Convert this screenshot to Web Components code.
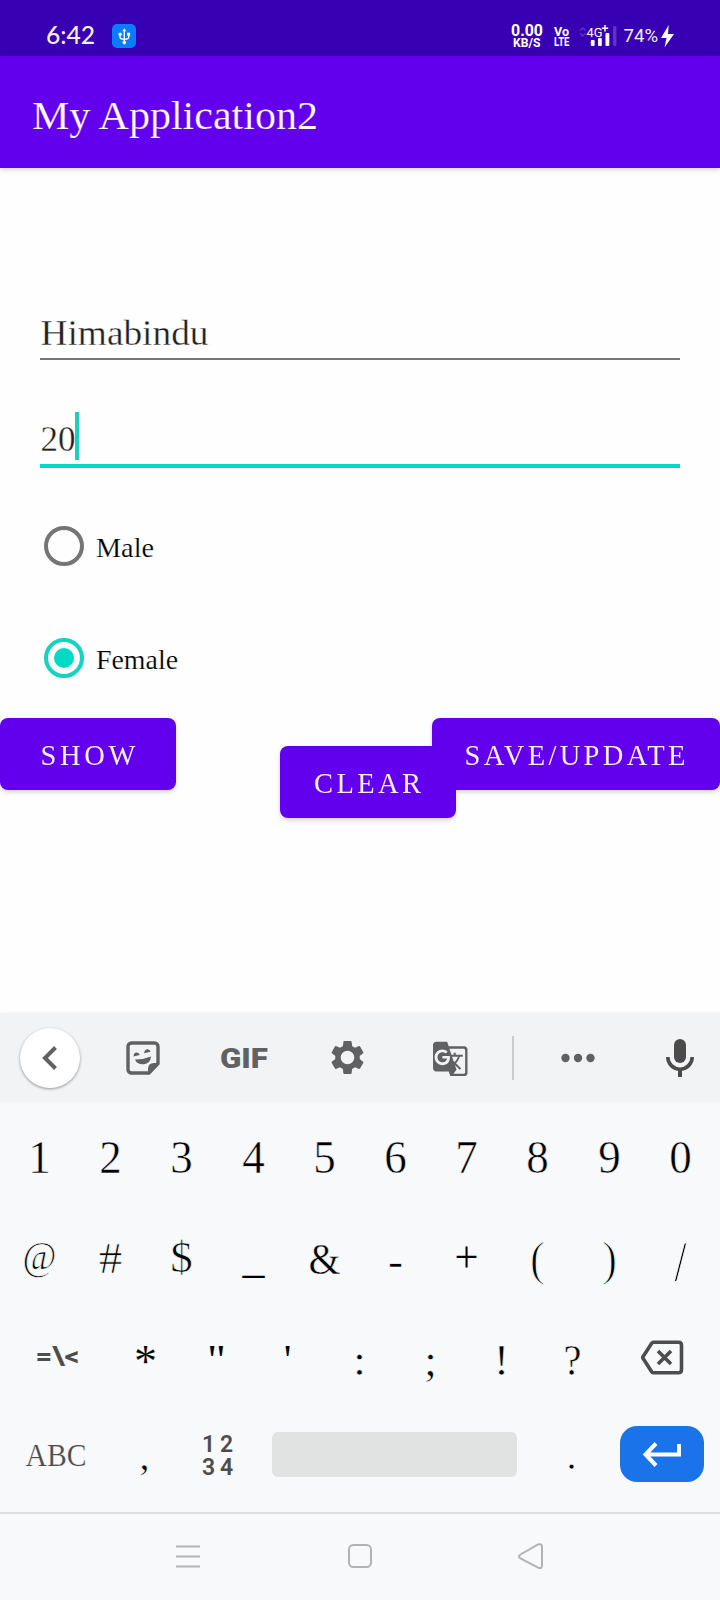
<!DOCTYPE html>
<html lang="en">
<head>
<meta charset="utf-8">
<title>My Application2</title>
<style>
body{margin:0;background:#fefefe;font-family:"Liberation Serif",serif}
</style>
</head>
<body>
<phone-screen>
  <status-bar></status-bar>
  <app-bar heading="My Application2"></app-bar>
  <profile-form></profile-form>
  <soft-keyboard></soft-keyboard>
  <nav-bar></nav-bar>
</phone-screen>
<script>
const define = (name, html) => customElements.define(name, class extends HTMLElement {
  constructor() {
    super();
    this.attachShadow({mode: 'open'});
  }
  connectedCallback() {
    const t = document.createElement('template');
    t.innerHTML = typeof html === 'function' ? html(this) : html;
    this.shadowRoot.replaceChildren(t.content.cloneNode(true));
  }
});
const attr = (el, n, d) => el.getAttribute(n) ?? d;
const esc = s => s.replace(/&/g, '&amp;').replace(/</g, '&lt;');

/* One line of text on an exact baseline: w/h box, x/y origin, optional fitted length.
   "thin" strokes the glyph edges in the surface colour (--surface) to lighten them. */
define('ink-text', el => {
  const len = attr(el, 'len', '');
  const fit = attr(el, 'fit', 'spacingAndGlyphs');
  const thin = attr(el, 'thin', '');
  return `<style>:host{display:block;flex:none}svg{display:block;overflow:visible}text{white-space:pre;${thin ? `stroke:var(--surface,#fefefe);stroke-width:${thin}` : ''}}</style>
  <svg width="${attr(el,'w',71)}" height="${attr(el,'h',40)}"><text x="${attr(el,'x',0)}" y="${attr(el,'y',30)}"
   font-size="${attr(el,'size',30)}" font-family="${attr(el,'font','Liberation Serif')}, serif" font-weight="${attr(el,'weight',400)}"
   text-anchor="${attr(el,'anchor','start')}" fill="currentColor" ${len ? `textLength="${len}" lengthAdjust="${fit}"` : ''}>${esc(attr(el,'value',''))}</text></svg>`;
});

define('phone-screen', `<style>:host{display:flex;flex-direction:column;width:720px;height:1600px;background:#fefefe;overflow:hidden}</style><slot></slot>`);

define('status-bar', `<style>
:host{display:flex;flex:none;height:56px;background:#3700b3;color:#f3effb;box-sizing:border-box;padding-left:46px}
svg{display:block;flex:none;overflow:visible}
.usb{margin:24px 0 0 16px}
.net{margin-left:375px}.gap{margin-left:10px}.sig{margin-left:9px}.bat{margin-left:6px}
</style>
<ink-text w="50" h="56" y="44.300" size="25.500" font="Lato" weight="500" len="49" value="6:42"></ink-text>
<svg class="usb" width="24" height="24"><rect width="24" height="24" rx="5" fill="#0a7cff"/>
 <g stroke="#fff" stroke-width="1.400" fill="none"><path d="M12.300 6v13M8 10v3.200q0 1.800 4.300 2.200M16.700 10v3.200q0 1.800-4.300 2.200"/></g>
 <path d="M12.300 4.200l2 3h-4z" fill="#fff"/><circle cx="12.300" cy="18.600" r="1.800" fill="#fff"/><circle cx="8.100" cy="10.200" r="1.700" fill="#fff"/><rect x="15.100" y="8.700" width="3" height="3" fill="#fff"/></svg>
<svg class="net" width="33" height="56" font-family="Roboto, sans-serif" font-weight="700" fill="#fff">
 <text x="0" y="36.300" font-size="17" textLength="32" lengthAdjust="spacingAndGlyphs">0.00</text>
 <text x="2" y="46.800" font-size="12.500" textLength="27.500" lengthAdjust="spacingAndGlyphs">KB/S</text></svg>
<svg class="gap" width="16" height="56" font-family="Roboto, sans-serif" font-weight="700" fill="#fff">
 <text x="0" y="36" font-size="13.500" textLength="15" lengthAdjust="spacingAndGlyphs">Vo</text>
 <text x="0" y="46.200" font-size="13" textLength="15.500" lengthAdjust="spacingAndGlyphs">LTE</text></svg>
<svg class="sig" width="39" height="56" fill="#fff">
 <path d="M1 30.800l2.800-3 2.800 3M1 33l2.800 3 2.800-3" fill="none" stroke="#5a30c2" stroke-width="1.600"/>
 <text x="7.500" y="37" font-family="Roboto, sans-serif" font-weight="400" font-size="13.500" textLength="16" lengthAdjust="spacingAndGlyphs">4G</text>
 <path d="M26 25v6.500M22.800 28.200h6.400" stroke="#fff" stroke-width="1.500"/>
 <rect x="11.800" y="40" width="3.800" height="6" rx="1"/><rect x="19" y="38" width="3.800" height="8" rx="1"/><rect x="26.500" y="33" width="3.800" height="13" rx="1"/>
 <rect x="34" y="26" width="3.400" height="20" rx="1.200" fill="#5c34c3"/></svg>
<ink-text class="bat" w="34" h="56" x="-.500" y="42.200" size="19" font="Roboto" len="34.500" value="74%"></ink-text>
<svg width="18" height="56" fill="#fff"><path d="M10.700 25L3 38h5.500L6.500 47.500 16 34h-6z"/></svg>`);

define('app-bar', el => `<style>:host{display:block;flex:none;height:112px;background:#6200ee;color:#fcf8ff;padding-left:32px;box-shadow:0 1px 6px rgba(0,0,0,.2);z-index:1;--surface:#6200ee}</style>
<ink-text w="300" h="112" y="73" size="40.500" thin=".200" len="286" value="${el.getAttribute('heading')}"></ink-text>`);

define('text-field', el => `<style>
:host{display:block;border-bottom:2px solid #777;color:#202020;height:60px}
:host([focused]){border-bottom:4px solid #03dac5}
.line{display:flex;height:100%}
.caret{width:4px;height:48px;background:#1cd0be;margin-top:4px}
</style><div class="line"><ink-text w="${attr(el,'w')}" h="60" x=".500" y="${attr(el,'y')}" size="36" thin=".350" len="${attr(el,'len')}" value="${attr(el,'value')}"></ink-text>${el.hasAttribute('focused') ? '<div class="caret"></div>' : ''}</div>`);

define('radio-option', el => `<style>
:host{display:flex;height:40px;color:#000}
svg{display:block;margin-right:12px}
</style><svg width="40" height="40"><circle cx="20" cy="20" r="18" fill="none" stroke-width="4" stroke="${el.hasAttribute('checked') ? '#14d3c0' : '#757575'}"/>${el.hasAttribute('checked') ? '<circle cx="20" cy="20" r="10" fill="#03dac5"/>' : ''}</svg>
<ink-text w="100" h="40" y="31.300" size="28" thin=".200" len="${attr(el,'len')}" value="${attr(el,'label')}"></ink-text>`);

define('action-button', el => `<style>
:host{display:block;height:72px;border-radius:8px;background:#6200ee;color:#f6efff}
</style><ink-text w="${attr(el,'w')}" h="72" x="${attr(el,'x')}" y="47" size="28.500" len="${attr(el,'len')}" fit="spacing" value="${attr(el,'label')}"></ink-text>`);

define('profile-form', `<style>
:host{display:flex;flex:1;flex-direction:column;align-items:stretch;min-height:0}
.fields{display:flex;flex-direction:column;padding:130px 40px 0}
.age{margin-top:48px;height:56px}
.radios{display:flex;flex-direction:column;gap:72px;padding:58px 44px 0}
.buttons{display:flex;align-items:flex-start;margin-top:40px;filter:drop-shadow(0 2px 2px rgba(0,0,0,.18))}
.clear{margin:28px 0 0 104px}
.save{margin-left:-24px}
</style>
<div class="fields">
 <text-field value="Himabindu" w="300" y="47" len="168"></text-field>
 <text-field class="age" focused value="20" w="35" y="43" len="35"></text-field>
</div>
<div class="radios"><radio-option label="Male" len="58"></radio-option><radio-option label="Female" len="82" checked></radio-option></div>
<div class="buttons">
 <action-button label="SHOW" w="176" x="40.500" len="95"></action-button>
 <action-button class="clear" label="CLEAR" w="176" x="34" len="107"></action-button>
 <action-button class="save" label="SAVE/UPDATE" w="288" x="32.500" len="221"></action-button>
</div>`);

define('tool-bar', `<style>
:host{display:grid;grid-template-columns:100px 86px 116px 91px 114px 12px 117px 88px;width:724px;height:89px;background:#f1f3f4;align-items:center;justify-items:center;color:#5f6163;box-shadow:0 -1px 3px rgba(0,0,0,.04)}
svg{display:block;overflow:visible}
.back{display:flex;width:60px;height:60px;border-radius:50%;background:#fff;align-items:center;justify-content:center;box-shadow:0 1px 3px rgba(0,0,0,.4)}
.rule{width:2px;height:44px;background:#c9cbcd}
</style>
<div class="back"><svg width="16" height="24" fill="none" stroke="currentColor" stroke-width="4"><path d="M13.500 1.500L3 12l10.500 10.500"/></svg></div>
<svg width="34" height="34"><path d="M5.500 2h23A3.500 3.500 0 0 1 32 5.500v17L23 32H5.500A3.500 3.500 0 0 1 2 28.500v-23A3.500 3.500 0 0 1 5.500 2z" fill="none" stroke="currentColor" stroke-width="3.400"/>
 <path d="M32 22h-4q-6 0-6 6v5zM7.600 15.500q0-3.800 2.900-4 2.800-.1 3.200 2.500zM18.200 12.200q.2-3.300 2.800-4 2.800-.5 3.600 2.500zM9 18.500q8 .2 16-3-.5 7-7.500 7.700-6.500.4-8.500-4.700z" fill="currentColor"/></svg>
<ink-text w="48" h="20" x="0" y="19.500" size="27" font="Roboto" weight="900" len="48" value="GIF"></ink-text>
<svg width="41" height="41" viewBox="0 0 24 24" fill="currentColor"><path fill-rule="evenodd" d="M19.140 12.940c.04-.3.06-.61.06-.94 0-.32-.02-.64-.07-.94l2.030-1.580c.18-.14.23-.41.12-.61l-1.920-3.320c-.12-.22-.37-.29-.59-.22l-2.390.96c-.5-.38-1.030-.7-1.620-.94l-.36-2.540c-.04-.24-.24-.41-.48-.41h-3.840c-.24 0-.43.17-.47.41l-.36 2.540c-.59.24-1.130.57-1.620.94l-2.390-.96c-.22-.08-.47 0-.59.22L2.740 8.870c-.12.21-.08.47.12.61l2.030 1.580c-.05.3-.09.63-.09.94s.02.64.07.94l-2.030 1.580c-.18.14-.23.41-.12.61l1.920 3.320c.12.22.37.29.59.22l2.390-.96c.5.38 1.030.7 1.620.94l.36 2.540c.05.24.24.41.48.41h3.840c.24 0 .44-.17.47-.41l.36-2.540c.59-.24 1.130-.56 1.620-.94l2.390.96c.22.08.47 0 .59-.22l1.920-3.320c.12-.22.07-.47-.12-.61l-2.010-1.580zM12 8a4 4 0 1 0 0 8 4 4 0 0 0 0-8z"/></svg>
<svg width="37.600" height="37.600" viewBox="-.300 -.700 24 24" fill="currentColor"><path d="M21 4H11l-1-3H3c-1.100 0-2 .9-2 2v15c0 1.100.9 2 2 2h8l1 3h9c1.100 0 2-.9 2-2V6c0-1.100-.9-2-2-2zM7 16c-2.760 0-5-2.240-5-5s2.240-5 5-5c1.350 0 2.480.5 3.350 1.300L9.030 8.570c-.38-.36-1.040-.78-2.030-.78-1.740 0-3.150 1.440-3.150 3.210S5.260 14.210 7 14.210c2.010 0 2.840-1.440 2.920-2.410H7v-1.710h4.680c.07.31.12.61.12 1.020C11.800 13.970 9.890 16 7 16zm6.170-5.420h3.700c-.43 1.250-1.110 2.430-2.050 3.470-.31-.35-.6-.72-.86-1.100l-.79-2.370zm8.330 9.920c0 .55-.45 1-1 1H14l2-2.500-1.040-3.100 3.100 3.100.92-.92-3.300-3.250.02-.02c1.130-1.250 1.930-2.690 2.400-4.220H20v-1.300h-4.530V8h-1.290v1.290h-1.440L11.460 5.500h9.040c.55 0 1 .45 1 1v14z"/></svg>
<div class="rule"></div>
<svg width="34" height="10" fill="currentColor"><circle cx="4.500" cy="5" r="4.200"/><circle cx="17" cy="5" r="4.200"/><circle cx="29.500" cy="5" r="4.200"/></svg>
<svg width="28" height="38" fill="#4b4b4b"><rect x="8" y="0" width="12" height="24" rx="6"/><path d="M1.800 18a12.200 12.200 0 0 0 24.400 0" fill="none" stroke="#4b4b4b" stroke-width="3.600"/><rect x="12" y="31" width="4" height="7"/></svg>`);

/* A key: [char, font size, baseline, fitted length, edge thinning] */
const glyph = ([c, size, y, len, thin]) => `<ink-text w="71.200" h="90" x="35.600" y="${y}" size="${size}" anchor="middle" thin="${thin || .5}" ${len ? `len="${len}"` : ''} value="${c.replace(/&/g,'&amp;').replace(/"/g,'&quot;')}"></ink-text>`;
const digits = [...'1234567890'].map(c => [c, 45.500, 70.500, 22.500]);
const symbols = [['@',39,57.500,34,.7],['#',45,61.500,23.500,.7],['$',44,60.700,22.500,.7],['_',44,61,22,.1],['&',45,62.700,32],['-',45,64.500,15],['+',45,61,24,.1],['(',49,63.500,15,1.100],[')',49,63.500,15,1.100],['/',56,70,12,.8]];
const marks = [['*',46,75,23,.1],['"',43,71.500,19,.1],["'",43,71.500,0,.1],[':',45,73],[';',45,73],['!',45,73],['?',45,73,18]];

define('soft-keyboard', `<style>
:host{display:flex;flex:none;flex-direction:column;width:720px;height:499px;background:#f8f9fb;color:#000;--surface:#f8f9fb}
.row{display:flex;height:100px;padding-left:4px;width:716px}
.row.r2{margin-top:9px;height:91px}
.row.last{height:109px}
.wide{width:105px;display:flex;flex:none;color:#4d4d4d}
.r3 .wide{width:106px}
.end{width:109px;display:flex;flex:none;justify-content:center}
svg{display:block}
.del{margin-top:37.500px}
.space{width:245px;height:45px;border-radius:6px;background:#e1e3e2;margin:30px 19px 0 20.800px;flex:none}
.enter{display:flex;width:84px;height:56px;border-radius:17px;background:#1a73e8;margin-top:24px;align-items:center;justify-content:center}
.pad{width:71px;flex:none;display:grid;grid-template-columns:17.500px 17.500px;grid-auto-rows:22.500px;padding:31px 0 0 4px;box-sizing:border-box;justify-content:center;color:#4d4d4d}
</style>
<tool-bar></tool-bar>
<div class="row">${digits.map(glyph).join('')}</div>
<div class="row r2">${symbols.map(glyph).join('')}</div>
<div class="row r3"><div class="wide"><ink-text w="105" h="100" x="53.500" y="62.500" size="26" font="Roboto" weight="700" anchor="middle" len="44" value="=\\<"></ink-text></div>
${marks.map(glyph).join('')}
<div class="end"><svg class="del" width="44" height="36" fill="none" stroke="#4d4d4d" stroke-width="3.600" stroke-linejoin="round" stroke-linecap="round"><path d="M12.500 2.200H37.500Q40.500 2.200 40.500 5.200V29.800Q40.500 32.800 37.500 32.800H12.500Q11.500 32.800 10.700 31.800L1.500 17.500 10.700 3.200Q11.500 2.200 12.500 2.200z"/><path stroke-linecap="butt" d="M17 11L30 24M30 11L17 24"/></svg></div></div>
<div class="row last"><div class="wide"><ink-text w="105" h="100" x="52" y="63.600" size="31.500" anchor="middle" thin=".200" len="61" value="ABC"></ink-text></div>
${glyph([',',40,67])}
<div class="pad">${[...'1234'].map(c => `<ink-text w="17" h="22" x="8.500" y="18.500" size="23" font="Roboto" weight="600" anchor="middle" value="${c}"></ink-text>`).join('')}</div>
<div class="space"></div>
${glyph(['.',40,67])}
<div class="end"><div class="enter"><svg width="40" height="26" fill="none" stroke="#fff" stroke-width="4"><path d="M37 3V13.500H4M14 2.500L3.500 13.500 14 24.500"/></svg></div></div></div>`);

define('nav-bar', `<style>
:host{display:flex;flex:none;height:88px;box-sizing:border-box;border-top:2px solid #dcdee0;background:#f8f9fb;padding:29px 0 0 176px}
svg{display:block;overflow:visible;fill:none;stroke:#b2b3b5;stroke-width:2}
</style>
<svg width="172" height="30"><path d="M0 3.500h24M0 13.500h24M0 23.500h24"/></svg>
<svg width="170" height="30"><rect x="1" y="2" width="22" height="22" rx="4.500"/></svg>
<svg width="28" height="30"><path d="M2.500 11.500L20 1.500Q24 .2 24 3.500V22.500Q24 26 20.500 24.800L2.500 15.500Q-.5 13.500 2.500 11.500z"/></svg>`);
</script>
</body>
</html>
